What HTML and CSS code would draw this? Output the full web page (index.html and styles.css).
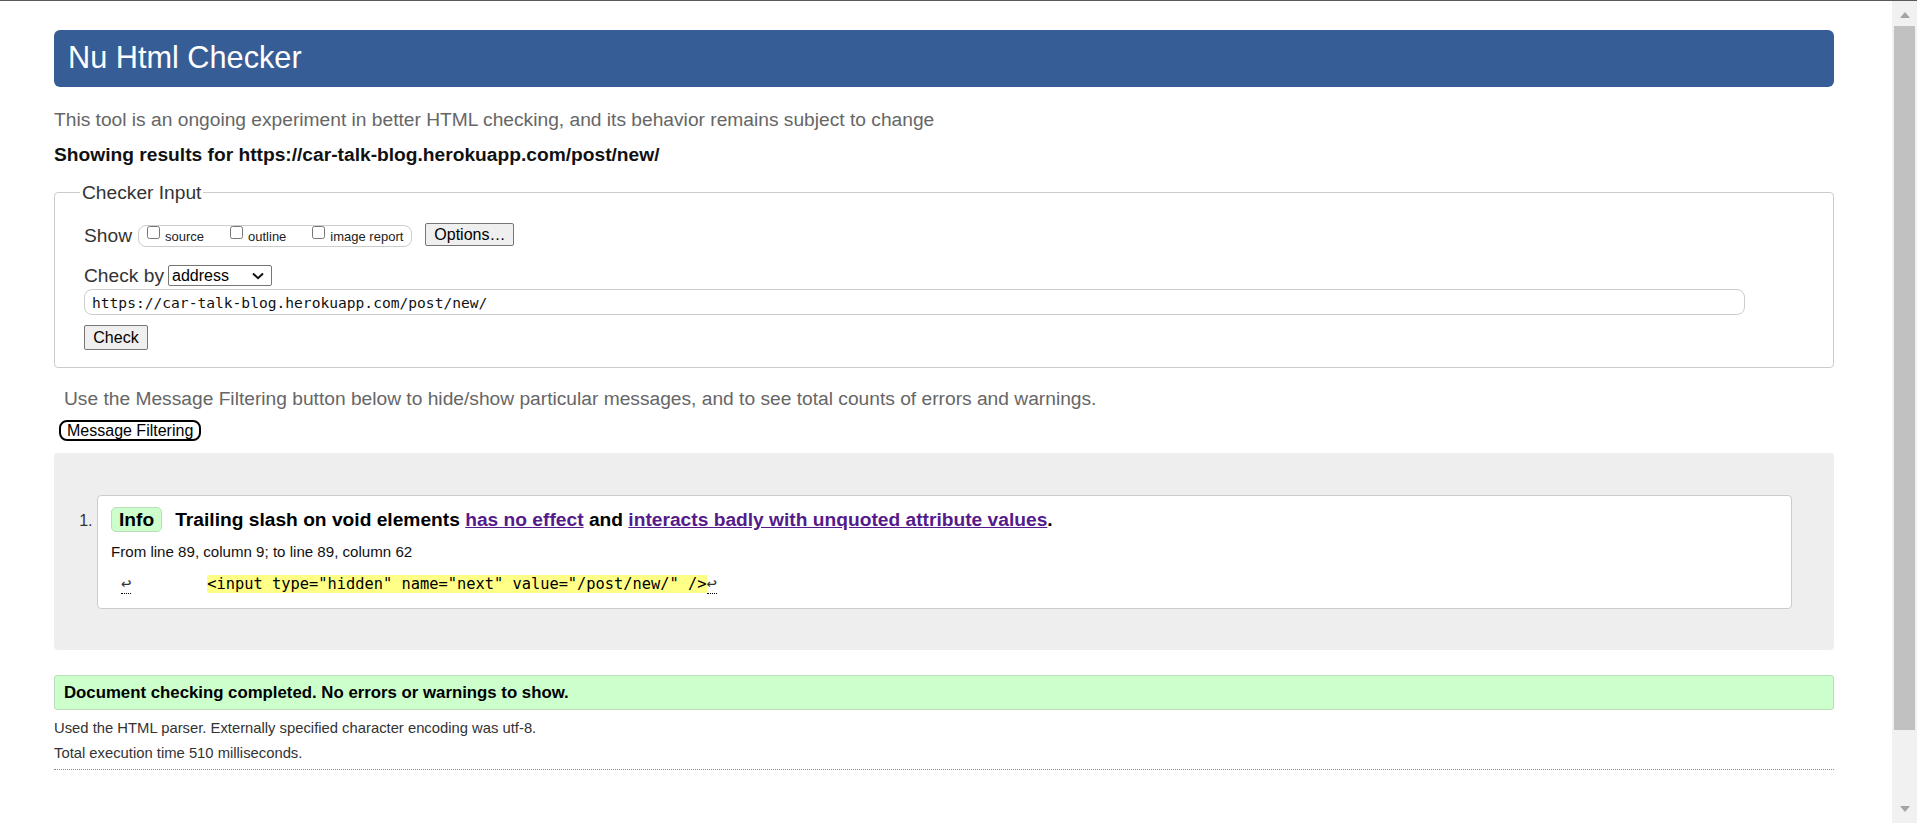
FILE: index.html
```html
<!DOCTYPE html>
<html lang="en">
<head>
<meta charset="utf-8">
<title>Showing results for https://car-talk-blog.herokuapp.com/post/new/ - Nu Html Checker</title>
<link rel="stylesheet" href="styles.css">
</head>
<body>
<main class="page">
  <h1 class="title">Nu Html Checker</h1>
  <p class="intro">This tool is an ongoing experiment in better HTML checking, and its behavior remains subject to change</p>
  <p class="showing">Showing results for https://car-talk-blog.herokuapp.com/post/new/</p>

  <fieldset class="checker">
    <legend class="checker-legend">Checker Input</legend>
    <div class="row show-row">
      <span class="row-label">Show</span>
      <span class="extra">
        <label class="opt"><input type="checkbox" class="cb"><span class="opt-text">source</span></label>
        <label class="opt"><input type="checkbox" class="cb"><span class="opt-text">outline</span></label>
        <label class="opt"><input type="checkbox" class="cb"><span class="opt-text">image report</span></label>
      </span>
      <button class="btn options-btn" type="button">Options…</button>
    </div>
    <div class="row checkby-row">
      <span class="row-label">Check by</span>
      <span class="select">
        <select class="select-native"><option>address</option></select>
        <svg class="chevron" width="12" height="8" viewBox="0 0 12 8"><path d="M1 1.5 L6 6.2 L11 1.5" fill="none" stroke="#111" stroke-width="2"/></svg>
      </span>
    </div>
    <input class="url" type="url" value="https://car-talk-blog.herokuapp.com/post/new/">
    <div class="submit-row"><button class="btn check-btn" type="button">Check</button></div>
  </fieldset>

  <p class="filter-note">Use the Message Filtering button below to hide/show particular messages, and to see total counts of errors and warnings.</p>
  <button class="filter-btn" type="button">Message Filtering</button>

  <div class="results">
    <ol class="messages">
      <li class="msg">
        <div class="msg-title">
          <strong class="badge">Info</strong>
          <span class="msg-text">Trailing slash on void elements <a class="ref" href="#">has no effect</a> and <a class="ref" href="#">interacts badly with unquoted attribute values</a>.</span>
        </div>
        <p class="location">From line 89, column 9; to line 89, column 62</p>
        <p class="extract"><code class="code"><span class="lf lf-start">↩</span>        <b class="hl">&lt;input type="hidden" name="next" value="/post/new/" /&gt;</b><span class="lf">↩</span></code></p>
      </li>
    </ol>
  </div>

  <p class="success">Document checking completed. No errors or warnings to show.</p>
  <p class="stats">Used the HTML parser. Externally specified character encoding was utf-8.</p>
  <p class="stats">Total execution time 510 milliseconds.</p>
  <hr class="rule">
</main>
<div class="scrollbar" aria-hidden="true">
  <div class="sb-btn"><span class="tri-up"></span></div>
  <div class="sb-thumb"></div>
  <div class="sb-space"></div>
  <div class="sb-btn sb-btn-down"><span class="tri-down"></span></div>
</div>
</body>
</html>
```

FILE: styles.css
```css
html, body {
  margin: 0;
  padding: 0;
  background: #fff;
}

body {
  border-top: 1px solid #5a5a5a;
  height: 822px;
  display: flex;
  overflow: hidden;
  font-family: "Liberation Sans", Arial, sans-serif;
  font-size: 19.2px;
  color: #000;
}

.page {
  flex: 1;
  min-width: 0;
  padding: 29px 58px 0 54px;
}

.title {
  margin: 0;
  height: 57px;
  box-sizing: border-box;
  padding: 0 14px 2px;
  line-height: 55px;
  font-size: 30.7px;
  font-weight: normal;
  color: #fff;
  background: #365d95;
  border-radius: 6px;
}

.intro {
  margin: 21px 0 0;
  font-size: 19.2px;
  line-height: 23px;
  color: #666;
}

.showing {
  margin: 13px 0 0;
  font-size: 19.2px;
  line-height: 22px;
  font-weight: bold;
  color: #111;
}

.checker {
  margin: 15px 0 0;
  padding: 0 29px 17px 29px;
  border: 1px solid #ccc;
  border-radius: 4px;
  color: #333;
}

.checker-legend {
  margin-left: -4px;
  padding: 0 2px;
  font-size: 19.2px;
  line-height: 23px;
}

.row {
  display: flex;
  align-items: center;
}

.row-label {
  font-size: 19.2px;
  line-height: 23px;
}

.show-row {
  margin-top: 19px;
  height: 24px;
}

.extra {
  display: flex;
  align-items: flex-start;
  height: 22px;
  box-sizing: border-box;
  margin-left: 6px;
  padding: 0 8px 0 8px;
  border: 1px solid #ccc;
  border-radius: 8px;
  align-self: flex-end;
}

.opt {
  display: flex;
  align-items: flex-start;
  margin-left: 26px;
}

.opt:first-child {
  margin-left: 0;
}

.cb {
  margin: 0;
  width: 13px;
  height: 13px;
}

.opt-text {
  margin: 3px 0 0 5px;
  font-size: 13px;
  line-height: 15px;
  color: #222;
}

.btn {
  font-family: "Liberation Sans", Arial, sans-serif;
  font-size: 16px;
  color: #000;
  background: #efefef;
  border: 1px solid #767676;
  border-radius: 2px;
  height: 25px;
  box-sizing: border-box;
  padding: 0 8px;
  line-height: 21px;
}

.options-btn {
  margin-left: 13px;
  height: 23px;
  line-height: 19px;
  align-self: flex-start;
}

.checkby-row {
  margin-top: 18px;
  height: 21px;
}

.select {
  display: inline-flex;
  align-items: center;
  margin-left: 4px;
  width: 104px;
  height: 21px;
  box-sizing: border-box;
  border: 1px solid #767676;
  border-radius: 2px;
  background: #fff;
}

.select-native {
  appearance: none;
  -webkit-appearance: none;
  border: 0;
  outline: 0;
  background: transparent;
  padding: 0 0 0 3px;
  margin: 0;
  width: 80px;
  font-family: "Liberation Sans", Arial, sans-serif;
  font-size: 16px;
  color: #000;
}

.chevron {
  margin-left: 3px;
}

.url {
  display: block;
  margin: 3px 0 0;
  width: calc(100% - 59px);
  height: 26px;
  box-sizing: border-box;
  padding: 0 7px;
  border: 1px solid #ccc;
  border-radius: 8px;
  font-family: "DejaVu Sans Mono", "Liberation Mono", monospace;
  font-size: 14.6px;
  color: #111;
  background: #fff;
}

.submit-row {
  margin-top: 10px;
  display: flex;
}

.check-btn {
  width: 64px;
  padding: 0;
}

.filter-note {
  margin: 19px 0 0 10px;
  font-size: 19.2px;
  line-height: 23px;
  color: #666;
}

.filter-btn {
  display: block;
  margin: 10px 0 0 5px;
  height: 21px;
  box-sizing: border-box;
  padding: 0 6px;
  border: 2px solid #000;
  border-radius: 8px;
  background: #fff;
  font-family: "Liberation Sans", Arial, sans-serif;
  font-size: 16px;
  line-height: 17px;
  color: #000;
}

.results {
  margin-top: 12px;
  padding: 42px 42px 41px 43px;
  background: #eee;
  border-radius: 4px;
}

.messages {
  margin: 0;
  padding: 0;
  list-style: decimal outside;
  color: #333;
  font-size: 16px;
}

.msg {
  padding: 11px 14px 14px 13px;
  background: #fff;
  border: 1px solid #ccc;
  border-radius: 4px;
}

.msg::marker {
  font-size: 16px;
}

.msg-title {
  display: flex;
  align-items: center;
  gap: 13px;
  color: #000;
}

.badge {
  display: inline-block;
  padding: 0 7px;
  font-size: 19.2px;
  line-height: 23px;
  background: #cfc;
  border: 1px solid #b9dcb9;
  border-radius: 5px;
}

.msg-text {
  font-size: 19.2px;
  line-height: 25px;
  font-weight: bold;
}

.ref {
  color: #551a8b;
}

.location {
  margin: 11px 0 0;
  font-size: 15.1px;
  line-height: 18px;
  color: #111;
}

.extract {
  margin: 12px 0 0 10px;
  line-height: 20px;
}

.code {
  font-family: "DejaVu Sans Mono", "Liberation Mono", monospace;
  font-size: 15.36px;
  white-space: pre;
  color: #000;
}

.lf {
  border-bottom: 1px dotted #000;
  color: #333;
  font-size: 17px;
}

.lf-start {
  margin-right: 2px;
}

.hl {
  font-weight: normal;
  background: #ff8;
}

.success {
  margin: 25px 0 0;
  padding: 0 9px;
  height: 35px;
  box-sizing: border-box;
  line-height: 33px;
  font-size: 16.8px;
  font-weight: bold;
  background: #cfc;
  border: 1px solid #bdb;
  border-radius: 3px;
  color: #000;
}

.stats {
  margin: 10px 0 0;
  font-size: 14.8px;
  line-height: 16px;
  color: #333;
}

.stats + .stats {
  margin-top: 9px;
}

.rule {
  margin: 8px 0 0;
  border: 0;
  border-top: 1px dotted #888;
  height: 0;
}

.scrollbar {
  width: 25px;
  flex: none;
  display: flex;
  flex-direction: column;
  align-items: center;
  background: #f1f1f1;
}

.sb-btn {
  height: 25px;
  width: 100%;
  display: flex;
  justify-content: center;
  align-items: flex-start;
  padding-top: 11px;
  box-sizing: border-box;
}

.sb-btn-down {
  align-items: flex-end;
  padding: 0 0 11px;
}

.tri-up {
  width: 0;
  height: 0;
  border-left: 5px solid transparent;
  border-right: 5px solid transparent;
  border-bottom: 6px solid #a3a3a3;
}

.tri-down {
  width: 0;
  height: 0;
  border-left: 5px solid transparent;
  border-right: 5px solid transparent;
  border-top: 6px solid #a3a3a3;
}

.sb-thumb {
  width: 21px;
  height: 704px;
  background: #c1c1c1;
}

.sb-space {
  flex: 1;
}
```
